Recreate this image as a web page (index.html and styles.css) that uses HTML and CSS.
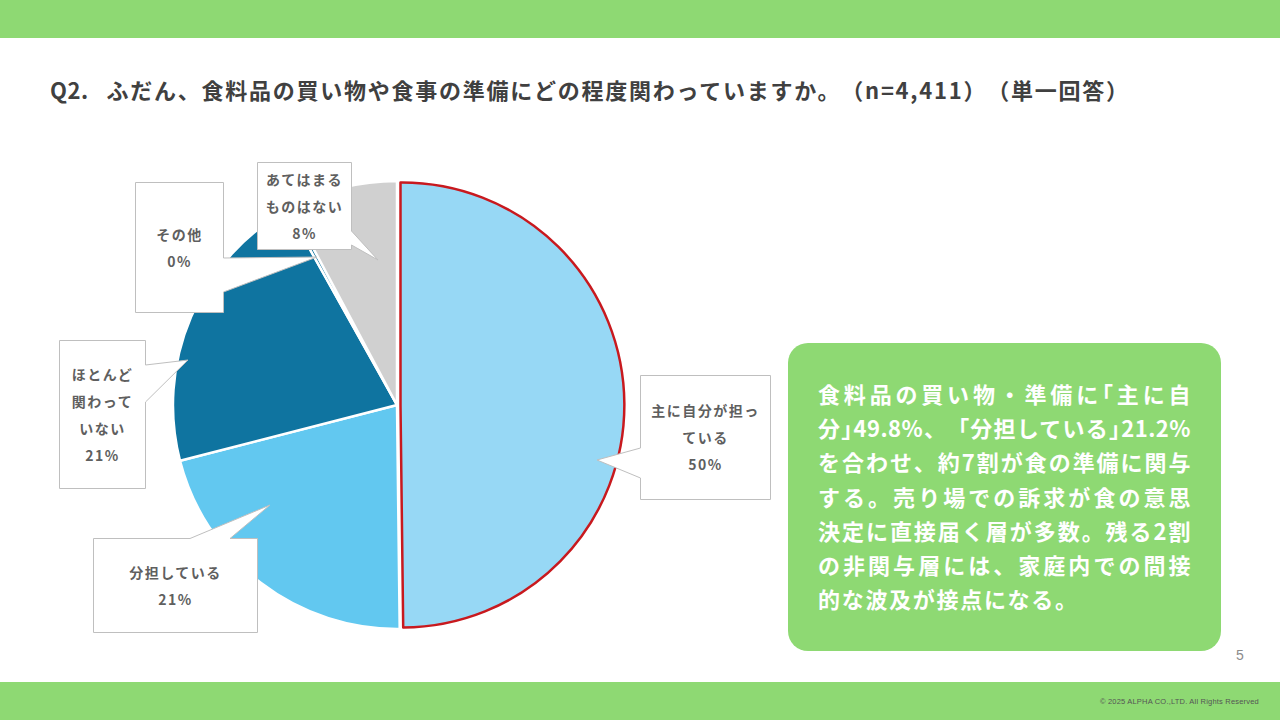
FILE: index.html
```html
<!DOCTYPE html>
<html lang="ja">
<head>
<meta charset="utf-8">
<title>Q2</title>
<link rel="stylesheet" href="styles.css">
</head>
<body>
<header class="topbar"></header>
<h1 class="title"><span class="qno">Q2.</span>ふだん、食料品の買い物や食事の準備にどの程度関わっていますか。（n=4,411）（単一回答）</h1>
<main class="content">
  <section class="chart">
    <svg class="pie" width="788" height="523" viewBox="0 140 788 523" xmlns="http://www.w3.org/2000/svg">
      <g class="slices">
        <path class="s-share" d="M397,405 L399.7,629 A224,224 0 0 1 180,460.7 Z"/>
        <path class="s-rarely" d="M397,405 L180,460.7 A224,224 0 0 1 287.7,209.5 Z"/>
        <path class="s-other" d="M397,405 L287.7,209.5 A224,224 0 0 1 291.5,207.4 Z"/>
        <path class="s-none" d="M397,405 L291.5,207.4 A224,224 0 0 1 397,181 Z"/>
        <path class="s-main" d="M400.5,405 L400.5,182.5 A222.5,222.5 0 0 1 403.2,627.5 Z"/>
      </g>
      <g class="callouts">
        <path d="M257.5,162.5 H351.5 V231 L378,260 L351.5,245 V249.5 H257.5 Z"/>
        <path d="M135.5,182.5 H223.5 V258 L317,257 L223.5,292 V312.5 H135.5 Z"/>
        <path d="M59.5,340.5 H145.5 V365 L188,360 L145.5,402 V488.5 H59.5 Z"/>
        <path d="M93.5,538.5 H190 L270,505 L230,538.5 H257.5 V632.5 H93.5 Z"/>
        <path d="M640.5,375.5 H770.5 V499.5 H640.5 V478 L597,460 L640.5,448 Z"/>
      </g>
    </svg>
    <div class="label l-none">あてはまる<br>ものはない<br>8%</div>
    <div class="label l-other">その他<br>0%</div>
    <div class="label l-rarely">ほとんど<br>関わって<br>いない<br>21%</div>
    <div class="label l-share">分担している<br>21%</div>
    <div class="label l-main">主に自分が担っ<br>ている<br>50%</div>
  </section>
  <aside class="summary">
    <span class="ln">食料品の買い物・準備に<span class="half">「</span>主に自</span>
    <span class="ln">分<span class="half">」</span>49.8%、「分担している<span class="half">」</span>21.2%</span>
    <span class="ln">を合わせ、約7割が食の準備に関与</span>
    <span class="ln">する。売り場での訴求が食の意思</span>
    <span class="ln">決定に直接届く層が多数。残る2割</span>
    <span class="ln">の非関与層には、家庭内での間接</span>
    <span class="ln last">的な波及が接点になる。</span>
  </aside>
  <div class="pagenum">5</div>
</main>
<footer class="bottombar"><span class="copy">© 2025 ALPHA CO.,LTD. All Rights Reserved</span></footer>
</body>
</html>
```

FILE: styles.css
```css
* { box-sizing: border-box; }
html, body { margin: 0; padding: 0; }
body {
  width: 1280px;
  height: 720px;
  overflow: hidden;
  background: #ffffff;
  font-family: "Noto Sans CJK JP", "Noto Sans", sans-serif;
  display: flex;
  flex-direction: column;
  text-spacing-trim: space-all;
}
.topbar {
  height: 38px;
  background: #8ED973;
  flex: none;
}
.title {
  margin: 0;
  height: 102px;
  padding: 36px 0 0 50px;
  font-size: 22px;
  line-height: 30px;
  font-weight: 700;
  letter-spacing: 1.75px;
  color: #404040;
  flex: none;
}
.qno { margin-right: 18px; letter-spacing: 0.5px; }
.content {
  height: 523px;
  display: flex;
  align-items: flex-start;
  flex: none;
}
.chart {
  position: relative;
  width: 788px;
  height: 523px;
  flex: none;
}
.pie { display: block; }
.slices path { stroke: #ffffff; stroke-width: 2.5; stroke-linejoin: round; }
.s-main { fill: #97D8F5; stroke: #C8191E !important; stroke-width: 2.5 !important; }
.s-share { fill: #62C8F0; }
.s-rarely { fill: #0F74A0; }
.s-other { fill: #0F74A0; }
.s-none { fill: #D0D0D0; }
.callouts path { fill: #ffffff; stroke: #BFBFBF; stroke-width: 1; }
.label {
  position: absolute;
  display: flex;
  align-items: center;
  justify-content: center;
  text-align: center;
  font-size: 14px;
  line-height: 27px;
  font-weight: 700;
  letter-spacing: 1.5px;
  color: #5f5f5f;
}
.l-none { left: 257px; top: 22px; width: 95px; height: 88px; }
.l-other { left: 135px; top: 42px; width: 89px; height: 131px; }
.l-rarely { left: 59px; top: 200px; width: 87px; height: 149px; }
.l-share { left: 93px; top: 398px; width: 165px; height: 95px; }
.l-main { left: 640px; top: 235px; width: 131px; height: 125px; }
.summary {
  margin-top: 203px;
  width: 433px;
  height: 308px;
  background: #8ED973;
  border-radius: 20px;
  padding: 33px 30px 0 30px;
  color: #ffffff;
  font-size: 22px;
  line-height: 34.2px;
  font-weight: 700;
  letter-spacing: 0.5px;
  flex: none;
}
.ln {
  display: block;
  white-space: nowrap;
  text-align: justify;
  text-align-last: justify;
}
.half { font-feature-settings: "halt"; }
.ln.last { text-align-last: left; letter-spacing: 1.7px; }
.pagenum {
  align-self: flex-end;
  margin-left: 15px;
  font-family: "Liberation Sans", sans-serif;
  font-size: 14px;
  line-height: 16px;
  color: #8c8c8c;
}
.bottombar {
  margin-top: 19px;
  height: 38px;
  background: #8ED973;
  display: flex;
  align-items: center;
  justify-content: flex-end;
  padding-right: 21px;
  flex: none;
}
.copy {
  font-family: "Liberation Sans", sans-serif;
  font-size: 7.5px;
  color: #555555;
  letter-spacing: 0.2px;
}
```
